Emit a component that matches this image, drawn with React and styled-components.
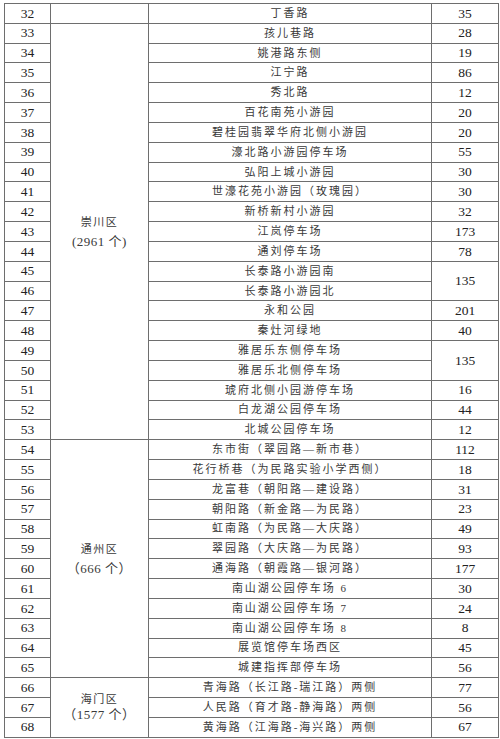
import styled, { createGlobalStyle } from 'styled-components';

const GlobalStyle = createGlobalStyle`
  html, body {
    margin: 0;
    padding: 0;
    background: #fff;
  }
  body {
    font-family: "Liberation Serif", "Noto Sans CJK SC", serif;
    color: #2a2a2a;
  }
`;

const Page = styled.div`
  padding: 3px 0 0 4px;
`;

const Table = styled.table`
  border-collapse: collapse;
  table-layout: fixed;
  width: 494px;
  border: 1px solid #5a5a5a;
  font-family: "Liberation Serif", "Noto Sans CJK SC", serif;
  color: #2a2a2a;
`;

const Row = styled.tr`
  height: 19.84px;
`;

const Cell = styled.td`
  border: 1px solid #6e6e6e;
  padding: 0;
  text-align: center;
  vertical-align: middle;
  white-space: nowrap;
  overflow: hidden;
  font-family: "Liberation Serif", "Noto Sans CJK SC", serif;
`;

const NumCell = styled(Cell)`
  font-size: 13.5px;
  line-height: 1;
  color: #222;
`;

const NameCell = styled(Cell)`
  font-size: 11px;
  letter-spacing: 2px;
  line-height: 1;
  color: #3a3a3a;
`;

const DistrictCell = styled(Cell)`
  font-size: 11px;
  letter-spacing: 1.5px;
  color: #3a3a3a;
  line-height: ${(p) => p.$lh}px;
`;

const DistrictCount = styled.div`
  font-size: 13px;
  letter-spacing: 0.5px;
`;

const rows = [
  [32, '丁香路', 35],
  [33, '孩儿巷路', 28],
  [34, '姚港路东侧', 19],
  [35, '江宁路', 86],
  [36, '秀北路', 12],
  [37, '百花南苑小游园', 20],
  [38, '碧桂园翡翠华府北侧小游园', 20],
  [39, '濠北路小游园停车场', 55],
  [40, '弘阳上城小游园', 30],
  [41, '世濠花苑小游园（玫瑰园）', 30],
  [42, '新桥新村小游园', 32],
  [43, '江岚停车场', 173],
  [44, '通刘停车场', 78],
  [45, '长泰路小游园南', 135, 2],
  [46, '长泰路小游园北', null],
  [47, '永和公园', 201],
  [48, '秦灶河绿地', 40],
  [49, '雅居乐东侧停车场', 135, 2],
  [50, '雅居乐北侧停车场', null],
  [51, '琥府北侧小园游停车场', 16],
  [52, '白龙湖公园停车场', 44],
  [53, '北城公园停车场', 12],
  [54, '东市街（翠园路—新市巷）', 112],
  [55, '花行桥巷（为民路实验小学西侧）', 18],
  [56, '龙富巷（朝阳路—建设路）', 31],
  [57, '朝阳路（新金路—为民路）', 23],
  [58, '虹南路（为民路—大庆路）', 49],
  [59, '翠园路（大庆路—为民路）', 93],
  [60, '通海路（朝霞路—银河路）', 177],
  [61, '南山湖公园停车场 6', 30],
  [62, '南山湖公园停车场 7', 24],
  [63, '南山湖公园停车场 8', 8],
  [64, '展览馆停车场西区', 45],
  [65, '城建指挥部停车场', 56],
  [66, '青海路（长江路-瑞江路）两侧', 77],
  [67, '人民路（育才路-静海路）两侧', 56],
  [68, '黄海路（江海路-海兴路）两侧', 67],
];

const districts = {
  32: { span: 1, name: '', count: '' },
  33: { span: 21, name: '崇川区', count: '(2961 个)', lh: 20 },
  54: { span: 12, name: '通州区', count: '（666 个）', lh: 20 },
  66: { span: 3, name: '海门区', count: '（1577 个）', lh: 15 },
};

export default function App() {
  return (
    <Page>
      <GlobalStyle />
      <Table>
        <colgroup>
          <col style={{ width: 46 }} />
          <col style={{ width: 98 }} />
          <col style={{ width: 283 }} />
          <col style={{ width: 67 }} />
        </colgroup>
        <tbody>
          {rows.map(([no, name, count, span]) => {
            const d = districts[no];
            return (
              <Row key={no}>
                <NumCell>{no}</NumCell>
                {d && (
                  <DistrictCell rowSpan={d.span} $lh={d.lh || 18}>
                    {d.name && <div>{d.name}</div>}
                    {d.count && <DistrictCount>{d.count}</DistrictCount>}
                  </DistrictCell>
                )}
                <NameCell>{name}</NameCell>
                {count !== null && <NumCell rowSpan={span || 1}>{count}</NumCell>}
              </Row>
            );
          })}
        </tbody>
      </Table>
    </Page>
  );
}
